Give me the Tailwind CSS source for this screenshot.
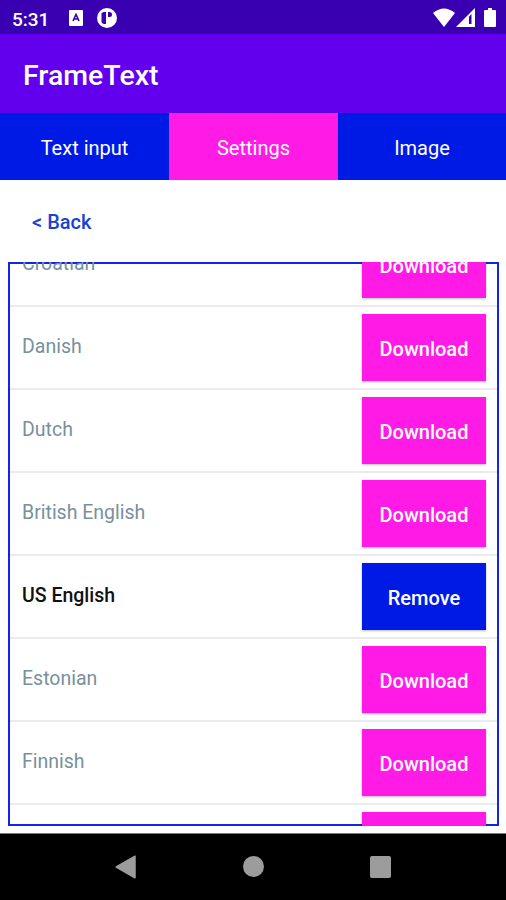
<!DOCTYPE html>
<html lang="en">
<head>
<meta charset="utf-8">
<title>FrameText</title>
<script src="https://cdn.jsdelivr.net/npm/@tailwindcss/browser@4"></script>
</head>
<body class="w-[506px] h-[900px] overflow-hidden bg-white font-[Roboto,sans-serif] flex flex-col">
<div class="h-[34px] shrink-0 bg-[#3900b1] flex items-center text-white pl-3 pr-[10px] pt-px">
  <span class="text-[19px] font-medium leading-none w-[57px] pt-[3px]">5:31</span>
  <svg class="w-[14px] h-[16px]" viewBox="0 0 14 16"><rect width="14" height="16" rx="1" fill="#fff"/><path d="M4 11 7 4.500 10 11M5.200 9h3.600" fill="none" stroke="#3900b1" stroke-width="1.600"/></svg>
  <svg class="w-5 h-5 ml-[14px]" viewBox="0 0 20 20"><circle cx="10" cy="10" r="10" fill="#fff"/><path d="M4.500 5.500Q5 4 7 4H9V16H7Q4.500 15.500 4.500 14Z" fill="#3900b1"/><path d="M11 4h1.500a2.300 2.300 0 0 1 0 5H11z" fill="#3900b1"/></svg>
  <svg class="w-[22px] h-[19px] ml-auto" viewBox="0 0 22 19"><path d="M0 5Q11-4 22 5L11 19Z" fill="#fff"/></svg>
  <svg class="w-[19px] h-[19px] ml-[1px]" viewBox="0 0 19 19"><path d="M0 19 19 0V19Z" fill="#fff"/><path d="M13 8.500 15.500 6V16H13Z" fill="#3900b1"/></svg>
  <svg class="w-[12px] h-[19px] ml-[9px]" viewBox="0 0 12 19"><path d="M4 0h4v2h3a1 1 0 0 1 1 1v15a1 1 0 0 1-1 1H1a1 1 0 0 1-1-1V3a1 1 0 0 1 1-1h3z" fill="#fff"/></svg>
</div>
<header class="h-[79px] shrink-0 bg-[#6200ee] flex items-center pl-[23px] pt-[5px]">
  <h1 class="text-white text-[28.500px] font-medium leading-none">FrameText</h1>
</header>
<nav class="h-[67px] shrink-0 grid grid-cols-[169px_169px_168px] text-white text-[20px] leading-none text-center">
  <div class="bg-[#001ae6] flex items-center justify-center pt-[3px]">Text input</div>
  <div class="bg-[#ff1ae6] flex items-center justify-center pt-[3px]">Settings</div>
  <div class="bg-[#001ae6] flex items-center justify-center pt-[3px]">Image</div>
</nav>
<div class="h-[82px] shrink-0 pl-[32px] pt-[31px] text-[20px] leading-[22px] font-medium text-[#1743d2]">&lt; Back</div>
<main id="list" class="h-[564px] shrink-0 ml-[8px] w-[491px] px-[2px] overflow-hidden shadow-[inset_0_0_0_2px_#1226e8]"></main>
<div class="h-[7px] shrink-0"></div>
<footer class="grow bg-black flex items-start pt-[21px] border-t border-[#777] text-[#9c9c9c]">
  <svg class="w-[21px] h-[24px] ml-[115px]" viewBox="0 0 21 24"><path d="M1.200 12 20 1.200V22.800Z" fill="currentColor" stroke="currentColor" stroke-width="1.500" stroke-linejoin="round"/></svg>
  <div class="w-[21px] h-[21px] rounded-full bg-[#9c9c9c] ml-[107px] mt-[1px]"></div>
  <div class="w-[21px] h-[22px] rounded-[2px] bg-[#9c9c9c] ml-[106px] mt-[1px]"></div>
</footer>
<script>
const names = ['Croatian','Danish','Dutch','British English','US English','Estonian','Finnish',''];
document.getElementById('list').innerHTML = names.map((n, i) => {
  const on = n === 'US English';
  const label = on ? 'Remove' : n ? 'Download' : '';
  return `<div class="h-[83px] flex justify-between pl-[12px] pr-[11px] border-b-2 border-[#ebebeb] ${i ? '' : '-mt-[38px]'}">
    <span class="pt-[28px] text-[19.500px] leading-[24px] ${on ? 'font-medium text-[#111]' : 'text-[#78909c]'}">${n}</span>
    <div class="mt-[7px] w-[124px] h-[67px] pt-[3px] flex items-center justify-center text-white text-[20px] leading-none font-medium shadow-[0_1px_2px_#0004] ${on ? 'bg-[#001ae6]' : 'bg-[#ff1ae6]'}">${label}</div>
  </div>`;
}).join('');
</script>
</body>
</html>
